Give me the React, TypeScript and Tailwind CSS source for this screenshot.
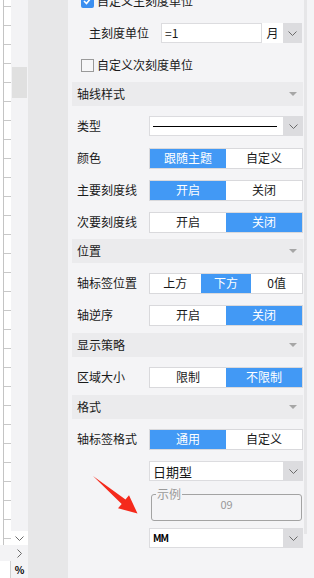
import React from 'react';

const Chevron = () => (
  <svg width="9" height="5" viewBox="0 0 9 5">
    <path d="M0.5 0.5 L4.5 4.5 L8.5 0.5" fill="none" stroke="#6b6b6b" strokeWidth="1" />
  </svg>
);

const Tri = () => (
  <svg width="8" height="4" viewBox="0 0 8 4">
    <path d="M0 0 L8 0 L4 4 Z" fill="#a6a6a6" />
  </svg>
);

function Header({ title, className = '' }: { title: string; className?: string }) {
  return (
    <div className={`h-[24px] bg-[#ebebed] flex items-center justify-between pl-[5px] pr-[6px] ${className}`}>
      <span>{title}</span>
      <Tri />
    </div>
  );
}

function Row({ label, children }: { label: string; children: React.ReactNode }) {
  return (
    <div className="h-[32px] flex items-center">
      <div className="w-[77px] pl-[5px] whitespace-nowrap">{label}</div>
      <div className="flex-1">{children}</div>
    </div>
  );
}

function Seg({ items, active }: { items: string[]; active: number }) {
  return (
    <div className="h-[21px] flex border border-[#d9d9dc] bg-white">
      {items.map((it, i) => (
        <div
          key={it}
          className={`flex-1 flex items-center justify-center ${i === active ? 'bg-[#4299f5] text-white' : 'text-[#1a1a1a]'}`}
        >
          {it}
        </div>
      ))}
    </div>
  );
}

function Select({ children }: { children?: React.ReactNode }) {
  return (
    <div className="h-[20px] flex">
      <div className="flex-1 bg-white border border-[#dcdcdf] flex items-center pl-[3px] pr-[6px]">{children}</div>
      <div className="w-[19px] bg-[#dcdcdf] flex items-center justify-center">
        <Chevron />
      </div>
    </div>
  );
}

export default function App() {
  const gridRows = Array.from({ length: 28 });

  return (
    <div className="relative w-[314px] h-[578px] overflow-hidden flex bg-[#f4f4f6] text-[12px] leading-none text-[#1a1a1a] font-['Noto_Sans_CJK_SC','Noto_Sans',sans-serif]">
      {/* sheet grid edge */}
      <div className="w-[11px] flex flex-col">
        <div className="h-[545px] bg-white">
          <div className="ml-[3px] h-full border-l border-[#c4c4c4]">
            <div className="h-[7px] border-b border-[#c8c8c8]" />
            {gridRows.map((_, i) => (
              <div key={i} className="h-[19px] border-b border-[#c8c8c8]" />
            ))}
          </div>
        </div>
        <div className="h-[16px] bg-[#f3f3f5]" />
        <div className="flex-1 bg-white border-r border-[#d0d0d0]" />
      </div>

      {/* scroll strip */}
      <div className="w-[17px] bg-[#f3f3f5] flex flex-col">
        <div className="mt-[67px] mx-[1px] h-[31px] bg-[#e0e0e0]" />
        <div className="mt-[433px] h-[14px] bg-white flex items-center justify-center">
          <Chevron />
        </div>
        <div className="h-[16px] flex items-center justify-center">
          <svg width="5" height="9" viewBox="0 0 5 9">
            <path d="M0.5 0.5 L4.5 4.5 L0.5 8.5" fill="none" stroke="#6b6b6b" strokeWidth="1" />
          </svg>
        </div>
        <div className="h-[17px] flex items-center justify-center text-[10px] font-bold text-black">%</div>
      </div>

      {/* gray band */}
      <div className="w-[40px] bg-[#e7e7e8]" />

      {/* property panel */}
      <div className="w-[236px] pl-[4px] pr-[1px]">
        <div className="-mt-[15px] flex flex-col">
          <div className="h-[32px] flex items-center pl-[9px]">
            <div className="w-[13px] h-[13px] rounded-[2px] bg-[#3b8ff0] flex items-center justify-center">
              <svg width="9" height="8" viewBox="0 0 9 8">
                <path d="M1 4 L3.5 6.5 L8 1" fill="none" stroke="white" strokeWidth="1.6" />
              </svg>
            </div>
            <span className="ml-[3px]">自定义主刻度单位</span>
          </div>
          <div className="h-[32px] flex items-center">
            <div className="w-[89px] pl-[17px]">主刻度单位</div>
            <div className="w-[101px] h-[20px] bg-white border border-[#dcdcdf] flex items-center pl-[3px]">=1</div>
            <div className="w-[21px] h-[20px] bg-white flex items-center justify-center">月</div>
            <div className="w-[19px] h-[20px] bg-[#dcdcdf] flex items-center justify-center">
              <Chevron />
            </div>
          </div>
          <div className="h-[32px] flex items-center pl-[9px]">
            <div className="w-[13px] h-[13px] border border-[#9a9a9a] bg-[#f7f7f8]" />
            <span className="ml-[3px]">自定义次刻度单位</span>
          </div>

          <Header title="轴线样式" className="mt-[1px]" />
          <div className="pt-[4px] pb-[1px]">
            <Row label="类型">
              <Select>
                <div className="flex-1 h-[1px] bg-black" />
              </Select>
            </Row>
            <Row label="颜色">
              <Seg items={['跟随主题', '自定义']} active={0} />
            </Row>
            <Row label="主要刻度线">
              <Seg items={['开启', '关闭']} active={0} />
            </Row>
            <Row label="次要刻度线">
              <Seg items={['开启', '关闭']} active={1} />
            </Row>
          </div>

          <Header title="位置" />
          <div className="pt-[4px] pb-[2px]">
            <Row label="轴标签位置">
              <Seg items={['上方', '下方', '0值']} active={1} />
            </Row>
            <Row label="轴逆序">
              <Seg items={['开启', '关闭']} active={1} />
            </Row>
          </div>

          <Header title="显示策略" />
          <div className="pt-[4px] pb-[2px]">
            <Row label="区域大小">
              <Seg items={['限制', '不限制']} active={1} />
            </Row>
          </div>

          <Header title="格式" />
          <div className="pt-[4px]">
            <Row label="轴标签格式">
              <Seg items={['通用', '自定义']} active={0} />
            </Row>
            <div className="h-[32px] flex items-center pl-[77px]">
              <div className="flex-1">
                <Select>
                  <span className="text-[13px]">日期型</span>
                </Select>
              </div>
            </div>
            <fieldset className="mt-[1px] ml-[79px] mr-[1px] h-[33px] border border-[#a3a3a3] rounded-[3px] px-[4px]">
              <legend className="px-[1px] text-[#9a9a9a] text-[12px]">示例</legend>
              <div className="text-center text-[11px] text-[#999] -mt-[1px]">09</div>
            </fieldset>
            <div className="mt-[7px] pl-[77px]">
              <Select>
                <span className="text-[10px] font-bold tracking-[-1px] text-black">MM</span>
              </Select>
            </div>
          </div>
        </div>
      </div>

      {/* right scroll edge */}
      <div className="w-[3px] flex flex-col">
        <div className="h-[534px] bg-[#e6e6e8]" />
      </div>
      <div className="w-[7px] bg-[#f4f4f6]" />

      {/* annotation arrow */}
      <svg className="absolute left-0 top-0 pointer-events-none" width="314" height="578" viewBox="0 0 314 578">
        <polygon
          points="93,476 125.5,499.4 129,495.2 137.5,513.5 118,508.2 121.7,504"
          fill="#f52a1c"
        />
      </svg>
    </div>
  );
}
